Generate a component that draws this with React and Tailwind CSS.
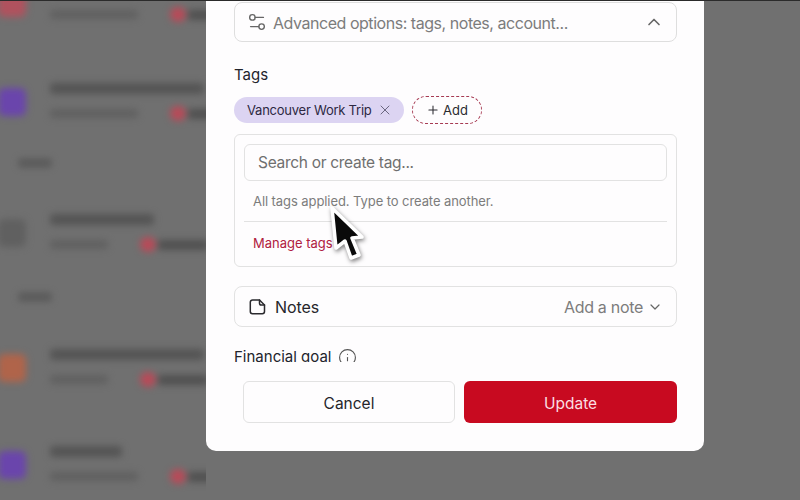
import React from "react";
import { ChevronDown, ChevronUp, Info, Plus, Settings2, X } from "lucide-react";

function Row({ className, iconClass, titleClass, subClass, pillClass }) {
  return (
    <div className={"flex items-center gap-[24px] -ml-[2px] blur-[3.5px] " + className}>
      <div className={"w-[28px] h-[28px] rounded-md shrink-0 " + iconClass} />
      <div className="flex flex-col gap-[12px]">
        <div className={"h-[11px] rounded-sm bg-[#545454] " + titleClass} />
        <div className="flex items-center gap-[32px]">
          <div className={"h-[9px] rounded-sm bg-[#606060] " + subClass} />
          <div className="flex items-center gap-[2px]">
            <div className="w-[16px] h-[15px] rounded-full bg-[#b84a58]" />
            <div className={"h-[10px] bg-[#505050] " + pillClass} />
          </div>
        </div>
      </div>
    </div>
  );
}

function Backdrop() {
  return (
    <div className="w-[206px] h-full overflow-hidden flex flex-col">
      <Row className="-mt-[17px]" iconClass="bg-[#b0525e]" titleClass="w-[90px] opacity-0" subClass="w-[88px]" pillClass="w-[40px]" />
      <Row className="mt-[61px]" iconClass="bg-[#6a45ac]" titleClass="w-[154px]" subClass="w-[88px]" pillClass="w-[40px]" />
      <div className="mt-[37px] ml-[18px] w-[34px] h-[10px] rounded-sm bg-[#5c5c5c] blur-[3px]" />
      <Row className="mt-[46px]" iconClass="bg-[#606060]" titleClass="w-[104px]" subClass="w-[58px]" pillClass="w-[50px]" />
      <div className="mt-[40px] ml-[18px] w-[34px] h-[10px] rounded-sm bg-[#5c5c5c] blur-[3px]" />
      <Row className="mt-[47px]" iconClass="bg-[#b0644a]" titleClass="w-[154px]" subClass="w-[58px]" pillClass="w-[50px]" />
      <Row className="mt-[59px]" iconClass="bg-[#6a45ac]" titleClass="w-[72px]" subClass="w-[88px]" pillClass="w-[40px]" />
    </div>
  );
}

function Cursor() {
  return (
    <svg className="absolute left-[324px] top-[199px]" width="46" height="68" viewBox="0 0 46 68" fill="none">
      <path
        d="M8 8 L12 48 L21 41 L27 58 L35 55 L28 38 L38 37 Z"
        fill="#0a0a0a"
        stroke="#ffffff"
        strokeWidth="3.5"
        strokeLinejoin="round"
        style={{ filter: "drop-shadow(1px 2px 2px rgba(0,0,0,.5))" }}
      />
    </svg>
  );
}

function NoteIcon() {
  return (
    <svg width="17" height="16" viewBox="0 0 17 16" fill="none" stroke="#2a2a2e" strokeWidth="1.5" strokeLinejoin="round" strokeLinecap="round">
      <path d="M3.5 1h7l5 5v6.5a2.2 2.2 0 0 1-2.2 2.2H3.5a2.2 2.2 0 0 1-2.2-2.2V3.2A2.2 2.2 0 0 1 3.5 1z" />
      <path d="M10.5 1v3.2A1.8 1.8 0 0 0 12.300 6h3.200" />
    </svg>
  );
}

export default function App() {
  return (
    <div
      className="relative w-[800px] h-[500px] overflow-hidden bg-[#707070] border-t border-[#2b2b2b]"
      style={{ fontFamily: '"Inter", "Open Sans", sans-serif' }}
    >
      <Backdrop />
      <div className="absolute left-[206px] top-0 w-[498px] h-[450px] bg-[#fefdfe] rounded-b-[10px] flex flex-col">
        <div className="h-[361px] overflow-hidden pl-[28px] pr-[27px] pt-[1px] flex flex-col">
          <div className="h-[40px] shrink-0 border border-[#dedede] rounded-lg flex items-center pl-[11px] pr-[12px]">
            <Settings2 size={22} strokeWidth={1.5} className="text-[#666]" />
            <span className="ml-[5px] pt-[1px] text-[16px] text-[#7c7c7c] tracking-[-0.46px]">Advanced options: tags, notes, account...</span>
            <ChevronUp size={20} strokeWidth={2} className="ml-auto text-[#666]" />
          </div>
          <div className="mt-[23px] text-[15px] leading-[20px] text-[#22242c]">Tags</div>
          <div className="mt-[11px] flex items-center gap-[8px]">
            <div className="h-[26px] w-[170px] rounded-full bg-[#dcd4f2] flex items-center pl-[13px] pr-[11px] text-[13px] text-[#2d2842] tracking-[-0.24px]">
              <span className="pt-[1px]">Vancouver Work Trip</span>
              <X size={16} strokeWidth={1.5} className="ml-auto text-[#6b6780]" />
            </div>
            <div className="h-[28px] w-[70px] rounded-full border border-dashed border-[#a63a52] flex items-center justify-center gap-[3px] text-[13px] text-[#2b2b30]">
              <Plus size={14} strokeWidth={1.8} />
              <span className="pt-[1px]">Add</span>
            </div>
          </div>
          <div className="mt-[10px] h-[133px] shrink-0 border border-[#e2e2e2] rounded-md px-[9px] pt-[9px] flex flex-col">
            <div className="h-[37px] shrink-0 border border-[#e2e2e2] rounded-md flex items-center pl-[13px] pt-[1px] text-[15.5px] text-[#6f6f6f] tracking-[-0.3px]">
              Search or create tag...
            </div>
            <div className="mt-[11px] pl-[9px] text-[13px] leading-[18px] text-[#7c7c7c] tracking-[-0.08px]">All tags applied. Type to create another.</div>
            <div className="mt-[11px] border-t border-[#e2e2e2]" />
            <div className="mt-[12px] pl-[9px] text-[13px] leading-[18px] text-[#b0203f]">Manage tags</div>
          </div>
          <div className="mt-[19px] h-[41px] shrink-0 border border-[#e2e2e2] rounded-lg flex items-center pl-[14px] pr-[13px]">
            <NoteIcon />
            <span className="ml-[9px] pt-[1px] text-[16px] text-[#26262b] tracking-[-0.1px]">Notes</span>
            <span className="ml-auto pt-[1px] text-[16px] text-[#7c7c7c] tracking-[-0.3px]">Add a note</span>
            <ChevronDown size={16} strokeWidth={1.8} className="ml-[4px] text-[#666]" />
          </div>
          <div className="mt-[20px] flex items-center gap-[6px] text-[15px] leading-[20px] text-[#22242c]">
            <span>Financial goal</span>
            <Info size={19} strokeWidth={1.4} className="text-[#555]" />
          </div>
        </div>
        <div className="flex-1 flex gap-[9px] pl-[37px] pr-[27px] pt-[19px]">
          <div className="w-[212px] h-[42px] pt-[3px] border border-[#e2e2e2] rounded-md flex items-center justify-center text-[15.5px] text-[#25252a]">Cancel</div>
          <div className="w-[213px] h-[42px] pt-[3px] rounded-md bg-[#c80a20] flex items-center justify-center text-[15.5px] text-[#fbdfe2]">Update</div>
        </div>
      </div>
      <Cursor />
    </div>
  );
}
